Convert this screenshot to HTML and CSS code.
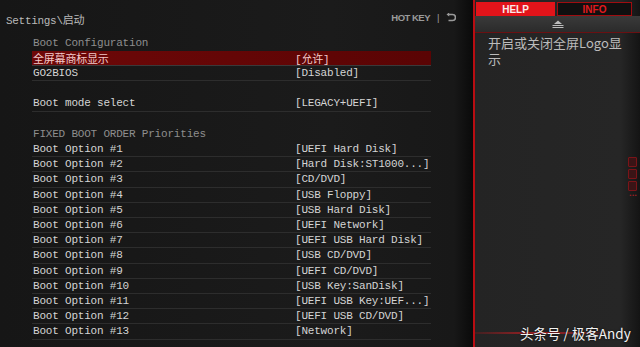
FILE: index.html
```html
<!DOCTYPE html>
<html lang="zh-CN">
<head>
    <meta charset="UTF-8">
    <title>Settings - 启动</title>
    <link rel="stylesheet" href="styles.css">
</head>
<body>
    <div class="main">
        <div class="topbar">
            <span class="crumb">Settings\启动</span>
            <span class="hotkey">HOT KEY <span class="sep">|</span>
                <svg class="back" width="10" height="9" viewBox="0 0 10 9">
                    <path d="M2 1.5 H6.5 A3 3 0 0 1 6.5 7.5 H2.5" fill="none" stroke="#9a9a9a" stroke-width="1.6"/>
                    <path d="M0.5 1.5 L3.2 -0.6 L3.2 3.6 Z" fill="#9a9a9a"/>
                </svg>
            </span>
        </div>

        <div class="list">
            <div class="row head">Boot Configuration</div>
            <div class="row sel"><span class="label">全屏幕商标显示</span><span class="value">[允许]</span></div>
            <div class="row"><span class="label">GO2BIOS</span><span class="value">[Disabled]</span></div>
            <div class="row blank"></div>
            <div class="row"><span class="label">Boot mode select</span><span class="value">[LEGACY+UEFI]</span></div>
            <div class="row blank"></div>
            <div class="row head">FIXED BOOT ORDER Priorities</div>
            <div class="row"><span class="label">Boot Option #1</span><span class="value">[UEFI Hard Disk]</span></div>
            <div class="row"><span class="label">Boot Option #2</span><span class="value">[Hard Disk:ST1000...]</span></div>
            <div class="row"><span class="label">Boot Option #3</span><span class="value">[CD/DVD]</span></div>
            <div class="row"><span class="label">Boot Option #4</span><span class="value">[USB Floppy]</span></div>
            <div class="row"><span class="label">Boot Option #5</span><span class="value">[USB Hard Disk]</span></div>
            <div class="row"><span class="label">Boot Option #6</span><span class="value">[UEFI Network]</span></div>
            <div class="row"><span class="label">Boot Option #7</span><span class="value">[UEFI USB Hard Disk]</span></div>
            <div class="row"><span class="label">Boot Option #8</span><span class="value">[USB CD/DVD]</span></div>
            <div class="row"><span class="label">Boot Option #9</span><span class="value">[UEFI CD/DVD]</span></div>
            <div class="row"><span class="label">Boot Option #10</span><span class="value">[USB Key:SanDisk]</span></div>
            <div class="row"><span class="label">Boot Option #11</span><span class="value">[UEFI USB Key:UEF...]</span></div>
            <div class="row"><span class="label">Boot Option #12</span><span class="value">[UEFI USB CD/DVD]</span></div>
            <div class="row"><span class="label">Boot Option #13</span><span class="value">[Network]</span></div>
        </div>
    </div>

    <div class="side">
        <div class="tabs">
            <div class="tab help">HELP</div>
            <div class="tab info">INFO</div>
        </div>
        <div class="scrollbar">
            <svg width="12" height="8" viewBox="0 0 12 8">
                <path d="M6 0.5 L10 4 H2 Z" fill="#bdbdbd"/>
                <rect x="0.5" y="5" width="11" height="1" fill="#bdbdbd"/>
                <rect x="0.5" y="7" width="11" height="1" fill="#bdbdbd"/>
            </svg>
        </div>
        <p class="helptext">开启或关闭全屏Logo显示</p>

        <div class="marks">
            <span class="box"></span>
            <span class="box"></span>
            <span class="box"></span>
            <span class="dots">•••</span>
        </div>

        <div class="glow"></div>
        <div class="watermark">头条号 / 极客Andy</div>
    </div>
</body>
</html>
```

FILE: styles.css
```css
body {
    margin: 0;
    width: 640px;
    height: 347px;
    overflow: hidden;
    background: #171717;
    display: flex;
    font-family: "Liberation Mono", "Noto Sans CJK SC", monospace;
}
.main {
    width: 473px;
    flex-shrink: 0;
    background: linear-gradient(to right, #161616 0%, #1b1b1b 70%, #181818 96%, #0a0a0a 100%);
}
.topbar {
    height: 35.5px;
    display: flex;
    justify-content: space-between;
    align-items: flex-start;
    padding: 11px 17px 0 6px;
    box-sizing: border-box;
}
.crumb {
    color: #b9b9b9;
    font-size: 11px;
    letter-spacing: -0.3px;
}
.hotkey {
    color: #9a9a9a;
    font-family: "Liberation Sans", sans-serif;
    font-weight: bold;
    font-size: 9.5px;
    letter-spacing: -0.5px;
    display: flex;
    align-items: center;
    gap: 7px;
    padding-top: 1px;
}
.hotkey .sep {
    font-weight: normal;
}
.list {
    margin-left: 32px;
    width: 399px;
}
.row {
    height: 15.21px;
    box-sizing: border-box;
    display: flex;
    align-items: center;
    font-size: 11px;
    letter-spacing: -0.2px;
    color: #d4d4d4;
    padding-left: 1px;
    border-bottom: 1px solid #2d2d2d;
}
.row.head {
    color: #8e8e8e;
    border-bottom: none;
}
.row.blank {
    border-bottom: none;
}
.row.sel {
    background: linear-gradient(to right, #6e0808, #5a0404);
    color: #f2c9c9;
    border-bottom-color: #3a3a3a;
}
.label {
    width: 262px;
}
.value {
    white-space: nowrap;
}
.side {
    position: relative;
    flex: 1;
    border-left: 2px solid #b80d12;
    background: linear-gradient(to right, #242424 0%, #262626 88%, #141414 100%);
}
.tabs {
    display: flex;
    gap: 2px;
    padding: 2px 0 0 1px;
    height: 16px;
    box-sizing: border-box;
}
.tab {
    height: 14px;
    font-family: "Liberation Sans", sans-serif;
    font-weight: bold;
    font-size: 10px;
    display: flex;
    align-items: center;
    justify-content: center;
    box-sizing: border-box;
}
.tab.help {
    width: 79px;
    background: #e2141a;
    color: #fbeaea;
}
.tab.info {
    width: 75px;
    background: #101010;
    border: 1px solid #a00d10;
    color: #e01a1e;
}
.scrollbar {
    height: 16px;
    background: linear-gradient(#3a3a3a, #2b2b2b);
    border-bottom: 1px solid #6a1012;
    display: flex;
    justify-content: center;
    align-items: center;
}
.helptext {
    margin: 2px 0 0 13px;
    width: 134px;
    word-break: break-all;
    font-family: "Noto Sans CJK SC", sans-serif;
    font-size: 13px;
    line-height: 16px;
    color: #bcbcbc;
}
.marks {
    position: absolute;
    right: 3px;
    top: 157px;
    display: flex;
    flex-direction: column;
    align-items: center;
    gap: 2px;
}
.box {
    width: 7px;
    height: 8px;
    border: 1px solid #7a1418;
    background: #3a1416;
    border-radius: 1px;
}
.dots {
    color: #9a2024;
    font-size: 6px;
    letter-spacing: -1px;
    line-height: 6px;
}
.glow {
    position: absolute;
    left: 0;
    right: 30px;
    top: 332px;
    height: 2px;
    background: linear-gradient(to right, rgba(180, 20, 24, 0.2), rgba(200, 30, 34, 0.8), rgba(160, 20, 24, 0.1));
}
.watermark {
    position: absolute;
    left: 45px;
    top: 323px;
    color: #f2f2f2;
    font-family: "Noto Sans CJK SC", sans-serif;
    font-size: 13.5px;
    text-shadow: 0 0 2px rgba(0, 0, 0, 0.8);
}
```
